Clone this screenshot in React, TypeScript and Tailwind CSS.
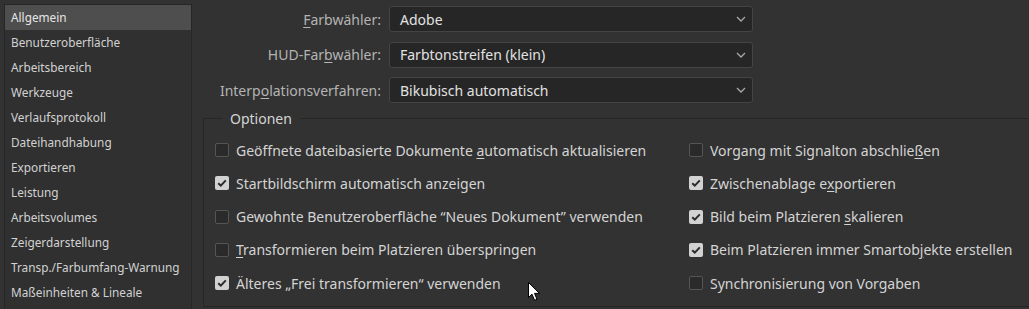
import React from "react";

const font = { fontFamily: '"Noto Sans", "Open Sans", sans-serif' };

const categories = [
  "Allgemein",
  "Benutzeroberfläche",
  "Arbeitsbereich",
  "Werkzeuge",
  "Verlaufsprotokoll",
  "Dateihandhabung",
  "Exportieren",
  "Leistung",
  "Arbeitsvolumes",
  "Zeigerdarstellung",
  "Transp./Farbumfang-Warnung",
  "Maßeinheiten & Lineale",
];

// label split into [before, mnemonic, after]
type Label = [string, string, string];

const selects: { label: Label; value: string }[] = [
  { label: ["", "F", "arbwähler:"], value: "Adobe" },
  { label: ["HUD-Far", "b", "wähler:"], value: "Farbtonstreifen (klein)" },
  { label: ["Interp", "o", "lationsverfahren:"], value: "Bikubisch automatisch" },
];

const leftOptions: { label: Label; checked: boolean }[] = [
  { label: ["Geöffnete dateibasierte Dokumente ", "a", "utomatisch aktualisieren"], checked: false },
  { label: ["Startbildschirm automatisch anzeigen", "", ""], checked: true },
  { label: ["Gewohnte Benutzeroberf", "l", "äche “Neues Dokument” verwenden"], checked: false },
  { label: ["", "T", "ransformieren beim Platzieren überspringen"], checked: false },
  { label: ["Älteres „Frei transformieren“ verwenden", "", ""], checked: true },
];

const rightOptions: { label: Label; checked: boolean }[] = [
  { label: ["Vorgang mit Signalton abschlie", "ß", "en"], checked: false },
  { label: ["Zwischenablage e", "x", "portieren"], checked: true },
  { label: ["Bild beim Platzieren ", "s", "kalieren"], checked: true },
  { label: ["Beim Platzieren immer Smartob", "j", "ekte erstellen"], checked: true },
  { label: ["Synchronisierung von Vorgaben", "", ""], checked: false },
];

function Mnemonic({ label }: { label: Label }) {
  return (
    <>
      {label[0]}
      {label[1] && <span className="underline underline-offset-2">{label[1]}</span>}
      {label[2]}
    </>
  );
}

function Checkbox({ checked }: { checked: boolean }) {
  if (checked) {
    return (
      <span className="flex h-[14px] w-[14px] shrink-0 items-center justify-center rounded-[2px] bg-[#d2d2d2]">
        <svg width="10" height="8" viewBox="0 0 10 8">
          <path d="M1.2 4.2 L3.8 6.6 L8.8 1.4" fill="none" stroke="#2b2b2b" strokeWidth="2" />
        </svg>
      </span>
    );
  }
  return <span className="h-[14px] w-[14px] shrink-0 rounded-[2px] border border-[#555555] bg-[#2a2a2a]" />;
}

function Option({ label, checked }: { label: Label; checked: boolean }) {
  return (
    <div className="flex h-[33.25px] items-center gap-[7px] text-[14px] text-[#d4d4d4]">
      <Checkbox checked={checked} />
      <span className="whitespace-nowrap">
        <Mnemonic label={label} />
      </span>
    </div>
  );
}

export default function App() {
  return (
    <div className="relative flex h-[309px] w-[1029px] overflow-hidden bg-[#323232]" style={font}>
      {/* category list */}
      <div className="w-[192px] shrink-0 pl-[4px] pt-[4px]">
        <div className="h-full border-l border-t border-r border-[#262626] bg-[#303030]">
          {categories.map((c, i) => (
            <div
              key={c}
              className={`flex h-[25px] items-center whitespace-nowrap px-[6px] text-[11.8px] ${
                i === 0 ? "bg-[#4e4e4e] text-[#e6e6e6]" : "text-[#d2d2d2]"
              }`}
            >
              {c}
            </div>
          ))}
        </div>
      </div>

      {/* settings */}
      <div className="flex flex-1 flex-col">
        <div className="flex flex-col gap-[9.5px] pt-[6px]">
          {selects.map((s) => (
            <div key={s.value} className="flex items-center">
              <div className="w-[197px] pr-[8px] text-right text-[14px] text-[#b4b4b4]">
                <Mnemonic label={s.label} />
              </div>
              <div className="flex h-[26px] w-[364px] items-center justify-between rounded-[3px] border border-[#444444] bg-[#262626] pl-[10px] pr-[6px] text-[14px] text-[#e2e2e2]">
                <span>{s.value}</span>
                <svg width="10" height="6" viewBox="0 0 10 6">
                  <path d="M1 1 L5 5 L9 1" fill="none" stroke="#a8a8a8" strokeWidth="1.3" />
                </svg>
              </div>
            </div>
          ))}
        </div>

        <fieldset className="ml-[11px] mr-[-4px] mt-[5px] h-[199px] border border-[#262626] pl-[11px]">
          <legend className="ml-[7px] px-[8px] text-[14px] text-[#d4d4d4]">Optionen</legend>
          <div className="flex pt-[4.5px]">
            <div className="w-[474px]">
              {leftOptions.map((o, i) => (
                <Option key={i} label={o.label} checked={o.checked} />
              ))}
            </div>
            <div>
              {rightOptions.map((o, i) => (
                <Option key={i} label={o.label} checked={o.checked} />
              ))}
            </div>
          </div>
        </fieldset>
      </div>

      {/* mouse pointer */}
      <svg className="absolute left-[528px] top-[282px]" width="13" height="20" viewBox="0 0 13 20">
        <path
          d="M0.5 0.5 L0.5 15.5 L4 12.2 L6.6 18.3 L9 17.3 L6.5 11.4 L11.5 11.4 Z"
          fill="#ffffff"
          stroke="#000000"
          strokeWidth="1"
          strokeLinejoin="round"
        />
      </svg>
    </div>
  );
}
